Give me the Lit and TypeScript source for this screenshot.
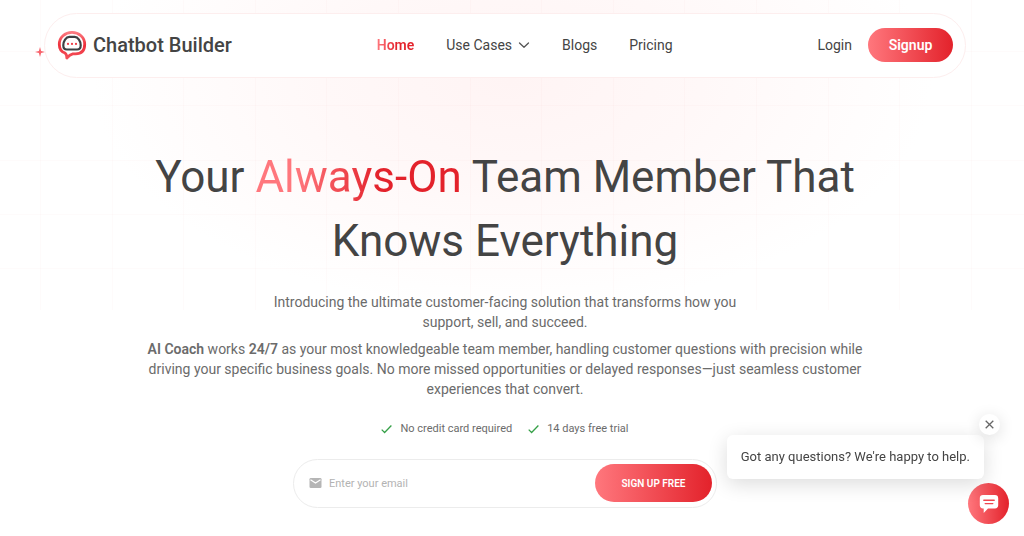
import { LitElement, html, svg, css } from "lit";
import { customElement, state } from "lit/decorators.js";

const COLUMN_LINES = Array.from({ length: 14 }, (_, i) => 40 + Math.round(i * 71.6));
const ROW_LINES = [51, 105, 160, 214, 268];

@customElement("hero-backdrop")
export class HeroBackdrop extends LitElement {
  static styles = css`
    :host {
      display: block;
      height: 310px;
    }
    .art {
      display: block;
      width: 100%;
      height: 310px;
    }
  `;

  render() {
    return html`
      <svg class="art" viewBox="0 0 1024 310" preserveAspectRatio="none" aria-hidden="true">
        <defs>
          <radialGradient id="glow" gradientUnits="userSpaceOnUse" cx="0" cy="0" r="1"
            gradientTransform="translate(512 80) scale(420 230)">
            <stop offset="0" stop-color="#fff4f4"></stop>
            <stop offset="0.45" stop-color="#fff8f8"></stop>
            <stop offset="1" stop-color="#fff8f8" stop-opacity="0"></stop>
          </radialGradient>
        </defs>
        <rect width="1024" height="310" fill="url(#glow)"></rect>
        <g fill="#d8404a" fill-opacity="0.02">
          ${COLUMN_LINES.map((x) => svg`<rect x=${x} y="0" width="1" height="310"></rect>`)}
          ${ROW_LINES.map((y) => svg`<rect x="0" y=${y} width="1024" height="1"></rect>`)}
        </g>
      </svg>
    `;
  }
}

@customElement("site-header")
export class SiteHeader extends LitElement {
  static styles = css`
    :host {
      display: block;
    }
    .bar {
      display: flex;
      justify-content: space-between;
      align-items: center;
      box-sizing: border-box;
      height: 65px;
      padding: 0 12px 2px;
      border: 1px solid #fdeeee;
      border-radius: 33px;
      background: #fff;
    }
    a {
      color: #444;
      text-decoration: none;
    }
    .brand {
      display: flex;
      align-items: center;
      gap: 5px;
      font-size: 20px;
      font-weight: 500;
      line-height: 24px;
    }
    .logo {
      width: 31px;
      height: 32px;
    }
    .links {
      display: flex;
      align-items: center;
      gap: 32px;
      font-size: 14px;
      line-height: 20px;
    }
    .home {
      font-weight: 600;
      color: transparent;
      background: linear-gradient(90deg, #ff777d 0%, #e3222b 55%);
      background-clip: text;
      -webkit-background-clip: text;
    }
    .menu {
      display: flex;
      align-items: center;
      gap: 6px;
    }
    .chevron {
      width: 12px;
      height: 8px;
    }
    .account {
      display: flex;
      align-items: center;
      justify-content: flex-end;
      gap: 16px;
      font-size: 14px;
      line-height: 20px;
    }
    .signup {
      box-sizing: border-box;
      width: 85px;
      height: 34px;
      padding: 0;
      border: 0;
      border-radius: 17px;
      color: #fff;
      font: inherit;
      font-weight: 600;
      background: linear-gradient(90deg, #ff777d, #e3222b);
    }
  `;

  render() {
    return html`
      <header class="bar">
        <a class="brand" href="#">
          <svg class="logo" viewBox="0 0 31 32" fill="none" aria-hidden="true">
            <defs>
              <linearGradient id="ring" x1="0" y1="0" x2="0" y2="1">
                <stop offset="0" stop-color="#fb7980"></stop>
                <stop offset="0.5" stop-color="#ee2f3a"></stop>
                <stop offset="1" stop-color="#f4505a"></stop>
              </linearGradient>
            </defs>
            <path d="M15 3.400C22 3.400 27.700 8.200 27.700 15.200C27.700 21.400 24.300 24.800 18.500 24.800H15.800C13.800 25.200 12 26.400 9.800 29C10 26.800 9.500 25.300 8 24C4.300 22.700 2.300 19 2.300 15.200C2.300 8.200 8 3.400 15 3.400Z" stroke="url(#ring)" stroke-width="2.800" stroke-linejoin="round"></path>
            <path d="M12.400 7.800H17.600C21.100 7.800 23.700 12.400 23.700 16.200C23.700 19.200 22.600 20.500 20.100 20.500H9.900C7.400 20.500 6.300 19.200 6.300 16.200C6.300 12.400 8.900 7.800 12.400 7.800Z" stroke="#3d4043" stroke-width="2.200"></path>
            <g fill="#ee3943">
              <circle cx="11" cy="14.900" r="1.100"></circle>
              <circle cx="15" cy="14.900" r="1.100"></circle>
              <circle cx="19" cy="14.900" r="1.100"></circle>
            </g>
          </svg>
          <span>Chatbot Builder</span>
        </a>
        <nav class="links">
          <a class="home" href="#">Home</a>
          <a class="menu" href="#">
            Use Cases
            <svg class="chevron" viewBox="0 0 12 8" fill="none" stroke="#555" stroke-width="1.3" stroke-linecap="round" stroke-linejoin="round" aria-hidden="true">
              <path d="M1.5 2L6 6.2L10.5 2"></path>
            </svg>
          </a>
          <a href="#">Blogs</a>
          <a href="#">Pricing</a>
        </nav>
        <div class="account">
          <a href="#">Login</a>
          <button class="signup" type="button">Signup</button>
        </div>
      </header>
    `;
  }
}

@customElement("hero-section")
export class HeroSection extends LitElement {
  static styles = css`
    :host {
      display: block;
    }
    .hero {
      display: flex;
      flex-direction: column;
      align-items: center;
      padding-top: 67px;
      text-align: center;
      color: #6b6b6b;
    }
    .title {
      margin: 0 0 19px;
      color: #444;
      font-size: 44px;
      font-weight: 400;
      line-height: 64px;
    }
    .accent {
      color: transparent;
      background: linear-gradient(90deg, #ff777d 20%, #e3222b 60%);
      background-clip: text;
      -webkit-background-clip: text;
    }
    .lead {
      margin: 0 0 7px;
      font-size: 14px;
      line-height: 20px;
    }
    .strong {
      font-weight: 600;
    }
    .perks {
      display: flex;
      gap: 16px;
      margin: 15px 0 22px;
      padding: 0;
      list-style: none;
      font-size: 11px;
      line-height: 16px;
    }
    .perk {
      display: flex;
      align-items: center;
      gap: 8px;
    }
    .tick {
      width: 11px;
      height: 10px;
    }
    .form {
      display: flex;
      align-items: center;
      box-sizing: border-box;
      width: 424px;
      max-width: 100%;
      height: 49px;
      padding: 0 4px 1px 15px;
      border: 1px solid #ececec;
      border-radius: 25px;
      background: #fff;
    }
    .label {
      display: flex;
    }
    .mail {
      width: 13px;
      height: 12px;
    }
    .email {
      flex: 1;
      min-width: 0;
      padding: 0 7px;
      border: 0;
      outline: 0;
      background: none;
      font: inherit;
      font-size: 11px;
      color: #444;
    }
    .email::placeholder {
      color: #b3b3b3;
      opacity: 1;
    }
    .submit {
      width: 117px;
      height: 38px;
      padding: 0;
      border: 0;
      border-radius: 19px;
      color: #fff;
      font: inherit;
      font-size: 10px;
      font-weight: 600;
      background: linear-gradient(90deg, #ff777d, #e3222b);
    }
  `;

  private perk(text: string) {
    return html`
      <li class="perk">
        <svg class="tick" viewBox="0 0 11 10" fill="none" stroke="#35a047" stroke-width="1.3" aria-hidden="true">
          <path d="M0.7 5.6L3.6 8.5L10.4 1.5"></path>
        </svg>
        ${text}
      </li>
    `;
  }

  render() {
    return html`
      <main class="hero">
        <h1 class="title">
          Your <span class="accent">Always-On</span> Team Member That<br />Knows Everything
        </h1>
        <p class="lead">
          Introducing the ultimate customer-facing solution that transforms how you<br />
          support, sell, and succeed.
        </p>
        <p class="lead">
          <b class="strong">AI Coach</b> works <b class="strong">24/7</b> as your most knowledgeable
          team member, handling customer questions with precision while<br />
          driving your specific business goals. No more missed opportunities or delayed
          responses—just seamless customer<br />
          experiences that convert.
        </p>
        <ul class="perks">
          ${this.perk("No credit card required")} ${this.perk("14 days free trial")}
        </ul>
        <form class="form" @submit=${(e: Event) => e.preventDefault()}>
          <label class="label" for="email" aria-label="Email">
            <svg class="mail" viewBox="0 0 13 12" aria-hidden="true">
              <rect x="0.5" y="1" width="12" height="10" rx="1.3" fill="#b5b5b5"></rect>
              <path d="M1.5 2.7L6.5 6L11.5 2.7" fill="none" stroke="#fff" stroke-width="1.2"></path>
            </svg>
          </label>
          <input class="email" id="email" type="email" placeholder="Enter your email" />
          <button class="submit" type="submit">SIGN UP FREE</button>
        </form>
      </main>
    `;
  }
}

@customElement("chat-widget")
export class ChatWidget extends LitElement {
  static styles = css`
    :host {
      position: fixed;
      right: 15px;
      bottom: 12px;
      display: flex;
      flex-direction: column;
      align-items: flex-end;
    }
    .bubble {
      position: relative;
      margin: 0 25px 4px 0;
      padding: 12px 14px;
      border-radius: 6px;
      background: #fff;
      color: #444;
      font-size: 13px;
      line-height: 20px;
      box-shadow: 0 5px 20px rgba(0, 0, 0, 0.14);
    }
    .close {
      position: absolute;
      top: -21px;
      right: -16px;
      display: grid;
      place-items: center;
      width: 21px;
      height: 21px;
      padding: 0;
      border: 0;
      border-radius: 50%;
      background: #fff;
      box-shadow: 0 3px 16px rgba(0, 0, 0, 0.14);
    }
    .cross {
      width: 9px;
      height: 9px;
    }
    .launcher {
      display: grid;
      place-items: center;
      width: 41px;
      height: 41px;
      padding: 0;
      border: 0;
      border-radius: 50%;
      background: linear-gradient(90deg, #ff777d, #e3222b);
    }
    .chat {
      width: 20px;
      height: 20px;
    }
  `;

  @state() private open = true;

  render() {
    return html`
      ${this.open
        ? html`
            <div class="bubble">
              Got any questions? We're happy to help.
              <button class="close" type="button" aria-label="Close" @click=${() => (this.open = false)}>
                <svg class="cross" viewBox="0 0 9 9" stroke="#666" stroke-width="1.3" aria-hidden="true">
                  <path d="M0.7 0.7L8.3 8.3M8.3 0.7L0.7 8.3"></path>
                </svg>
              </button>
            </div>
          `
        : null}
      <button class="launcher" type="button" aria-label="Open chat">
        <svg class="chat" viewBox="0 0 20 20" aria-hidden="true">
          <path d="M4 1H16C18 1 19.200 2.200 19.200 4.200V11.300C19.200 13.300 18 14.500 16 14.500H9L4.700 19V14.500H4C2 14.500 0.800 13.300 0.800 11.300V4.200C0.800 2.200 2 1 4 1Z" fill="#fff"></path>
          <path d="M4.800 6.200H15.200M6.200 9.600H13.800" stroke="#f0464f" stroke-width="1.400" stroke-linecap="round"></path>
        </svg>
      </button>
    `;
  }
}

@customElement("app-root")
export class AppRoot extends LitElement {
  static styles = css`
    :host {
      display: block;
      position: relative;
      min-height: 100vh;
      background: #fff;
      font-family: Roboto, "Open Sans", sans-serif;
    }
    .backdrop {
      position: absolute;
      top: 0;
      left: 0;
      right: 0;
    }
    .page {
      position: relative;
      padding: 13px 58px 0 44px;
    }
    .spark {
      position: absolute;
      top: 47px;
      left: 35px;
      width: 10px;
      height: 10px;
    }
  `;

  render() {
    return html`
      <hero-backdrop class="backdrop"></hero-backdrop>
      <svg class="spark" viewBox="0 0 10 10" aria-hidden="true">
        <path d="M5 0L6.100 3.900L10 5L6.100 6.100L5 10L3.900 6.100L0 5L3.900 3.900Z" fill="#f8626b"></path>
      </svg>
      <div class="page">
        <site-header></site-header>
        <hero-section></hero-section>
      </div>
      <chat-widget></chat-widget>
    `;
  }
}
